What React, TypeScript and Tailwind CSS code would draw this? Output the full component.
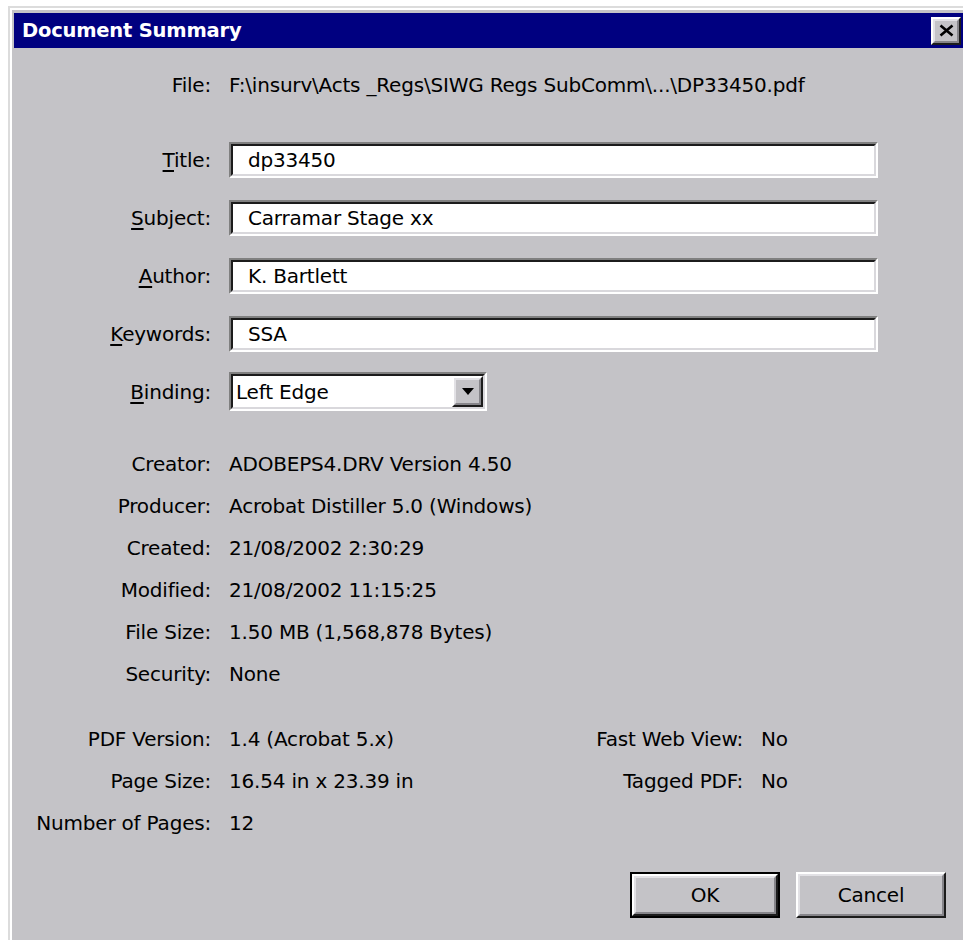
import React from 'react';

const font = { fontFamily: '"DejaVu Sans", "Liberation Sans", sans-serif' };

function Key({ label }: { label: string }) {
  // first letter is the access key, drawn underlined
  return (
    <span>
      <span className="underline underline-offset-[3px] decoration-[1.5px]">{label[0]}</span>
      {label.slice(1)}:
    </span>
  );
}

function Field({ label, value }: { label: string; value: string }) {
  return (
    <div className="flex items-center h-[40px]">
      <div className="w-[197px] text-right">
        <Key label={label} />
      </div>
      <div className="ml-[18px] w-[649px] border-2 border-t-[#808080] border-l-[#808080] border-b-white border-r-white">
        <div className="h-[32px] flex items-center pl-[15px] bg-white border-2 border-t-[#1c1c1c] border-l-[#1c1c1c] border-b-[#d9d8dc] border-r-[#d9d8dc]">
          {value}
        </div>
      </div>
    </div>
  );
}

function Info({ label, value }: { label: string; value: string }) {
  return (
    <div className="flex items-center h-[24px]">
      <div className="w-[197px] text-right">{label}:</div>
      <div className="ml-[18px]">{value}</div>
    </div>
  );
}

function Raised({ children, className = '' }: { children: React.ReactNode; className?: string }) {
  return (
    <div className={`border-2 border-t-white border-l-white border-b-[#1c1c1c] border-r-[#1c1c1c] ${className}`}>
      <div className="w-full h-full flex items-center justify-center border-2 border-t-[#e2e1e5] border-l-[#e2e1e5] border-b-[#86858a] border-r-[#86858a]">
        {children}
      </div>
    </div>
  );
}

export default function App() {
  return (
    <div className="w-[963px] h-[940px] overflow-hidden bg-white text-[20px] tracking-[-0.2px] text-black" style={font}>
      <div className="ml-[8px] mt-[6px] w-[955px] h-[960px] border-t-2 border-l-2 border-[#dcdcdc]">
        <div className="w-full h-full border-t-2 border-l-2 border-white bg-[#c4c3c7] pt-[3px] pl-[2px]">
          {/* caption bar */}
          <div className="h-[35px] bg-[#000080] flex items-center justify-between pl-[8px] pr-[2px]">
            <span className="text-white font-bold text-[19.5px] tracking-[-0.2px]">Document Summary</span>
            <Raised className="w-[30px] h-[28px] bg-[#c4c3c7]">
              <svg width="15" height="13" viewBox="0 0 15 13">
                <path d="M1.5 1.5 L13.5 11.5 M13.5 1.5 L1.5 11.5" stroke="#000" strokeWidth="2.6" />
              </svg>
            </Raised>
          </div>

          <div className="pt-[25px]">
            <div className="flex items-center h-[24px]">
              <div className="w-[197px] text-right">File:</div>
              <div className="ml-[18px]">F:\insurv\Acts _Regs\SIWG Regs SubComm\...\DP33450.pdf</div>
            </div>

            <div className="mt-[43px] flex flex-col gap-[18px]">
              <Field label="Title" value="dp33450" />
              <Field label="Subject" value="Carramar Stage xx" />
              <Field label="Author" value="K. Bartlett" />
              <Field label="Keywords" value="SSA" />
              <div className="flex items-center h-[39px]">
                <div className="w-[197px] text-right">
                  <Key label="Binding" />
                </div>
                <div className="ml-[18px] w-[258px] border-2 border-t-[#808080] border-l-[#808080] border-b-white border-r-white">
                  <div className="h-[35px] flex items-center bg-white border-2 border-t-[#1c1c1c] border-l-[#1c1c1c] border-b-[#d9d8dc] border-r-[#d9d8dc]">
                    <span className="flex-1 pl-[3px]">Left Edge</span>
                    <Raised className="w-[31px] h-full bg-[#c4c3c7]">
                      <svg width="12" height="7" viewBox="0 0 12 7">
                        <path d="M0 0 H12 L6 7 Z" fill="#000" />
                      </svg>
                    </Raised>
                  </div>
                </div>
              </div>
            </div>

            <div className="mt-[41px] flex flex-col gap-[18px]">
              <Info label="Creator" value="ADOBEPS4.DRV Version 4.50" />
              <Info label="Producer" value="Acrobat Distiller 5.0 (Windows)" />
              <Info label="Created" value="21/08/2002 2:30:29" />
              <Info label="Modified" value="21/08/2002 11:15:25" />
              <Info label="File Size" value="1.50 MB (1,568,878 Bytes)" />
              <Info label="Security" value="None" />
            </div>

            <div className="mt-[41px] grid grid-cols-[197px_282px_214px_1fr] gap-x-[18px] gap-y-[18px] auto-rows-[24px] items-center">
              <div className="text-right">PDF Version:</div>
              <div>1.4 (Acrobat 5.x)</div>
              <div className="text-right">Fast Web View:</div>
              <div>No</div>
              <div className="text-right">Page Size:</div>
              <div>16.54 in x 23.39 in</div>
              <div className="text-right">Tagged PDF:</div>
              <div>No</div>
              <div className="text-right whitespace-nowrap">Number of Pages:</div>
              <div>12</div>
            </div>

            <div className="mt-[37px] flex gap-[16px] pl-[616px]">
              <div className="w-[150px] h-[46px] border-2 border-[#000]">
                <Raised className="w-full h-full">OK</Raised>
              </div>
              <Raised className="w-[150px] h-[46px]">Cancel</Raised>
            </div>
          </div>
        </div>
      </div>
    </div>
  );
}
